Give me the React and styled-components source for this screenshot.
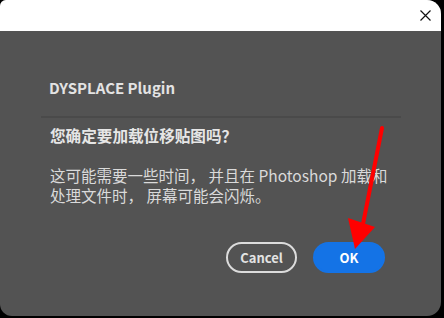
import React from "react";
import styled, { createGlobalStyle } from "styled-components";

const Global = createGlobalStyle`
  html, body { margin: 0; padding: 0; background: #000; }
  body { width: 444px; height: 318px; overflow: hidden; font-family: "Noto Sans CJK SC", sans-serif; }
`;

const Page = styled.div`
  position: relative;
  width: 444px;
  height: 318px;
  background: #000;
`;

const Dialog = styled.div`
  width: 441px;
  height: 316px;
  background: #535353;
  border-radius: 6px 14px 14px 12px;
  overflow: hidden;
  display: flex;
  flex-direction: column;
`;

const TitleBar = styled.div`
  height: 31px;
  background: #fff;
  display: flex;
  align-items: center;
  justify-content: flex-end;
  padding-right: 10px;
  flex-shrink: 0;
`;

const CloseButton = styled.button`
  width: 12px;
  height: 12px;
  padding: 0;
  border: none;
  background: none;
  display: flex;
  align-items: center;
  justify-content: center;
  margin-top: -1px;
`;

const Body = styled.div`
  padding: 47px 40px 0 41px;
  display: flex;
  flex-direction: column;
`;

const Title = styled.h1`
  margin: 0;
  padding-left: 8px;
  font-family: "Noto Sans CJK SC", sans-serif;
  font-weight: 700;
  font-size: 15px;
  line-height: 20px;
  color: #e3e3e3;
`;

const Divider = styled.div`
  margin-top: 18px;
  height: 2px;
  background: #4a4a4a;
`;

const Heading = styled.h2`
  margin: 7px 0 0;
  padding-left: 9px;
  font-family: "Noto Sans CJK SC", sans-serif;
  font-weight: 700;
  font-size: 15.6px;
  line-height: 20px;
  color: #e6e6e6;
`;

const Message = styled.p`
  margin: 20px 0 0;
  padding-left: 9px;
  width: 350px;
  font-family: "Noto Sans CJK SC", sans-serif;
  font-weight: 400;
  font-size: 15.5px;
  line-height: 20px;
  color: #dadada;
`;

const Actions = styled.div`
  margin-top: 37px;
  padding-right: 16px;
  display: flex;
  justify-content: flex-end;
  gap: 16px;
`;

const Button = styled.button`
  box-sizing: border-box;
  height: 31px;
  width: ${(p) => (p.$primary ? "72px" : "71px")};
  border-radius: 16px;
  border: 2px solid ${(p) => (p.$primary ? "#1473e6" : "#dcdcdc")};
  background: ${(p) => (p.$primary ? "#1473e6" : "transparent")};
  color: ${(p) => (p.$primary ? "#fff" : "#e3e3e3")};
  font-family: "Noto Sans CJK SC", sans-serif;
  font-weight: 700;
  font-size: 13px;
  padding: 0;
  display: flex;
  align-items: center;
  justify-content: center;
`;

const Annotation = styled.svg`
  position: absolute;
  left: 0;
  top: 0;
  pointer-events: none;
`;

export default function App() {
  return (
    <Page>
      <Global />
      <Dialog>
        <TitleBar>
          <CloseButton aria-label="Close">
            <svg width="11" height="11" viewBox="0 0 11 11">
              <path d="M0.5 0.5 L10.5 10.5 M10.5 0.5 L0.5 10.5" stroke="#111" strokeWidth="1.2" fill="none" />
            </svg>
          </CloseButton>
        </TitleBar>
        <Body>
          <Title>DYSPLACE Plugin</Title>
          <Divider />
          <Heading>您确定要加载位移贴图吗？</Heading>
          <Message>这可能需要一些时间， 并且在 Photoshop 加载和处理文件时， 屏幕可能会闪烁。</Message>
          <Actions>
            <Button>Cancel</Button>
            <Button $primary>OK</Button>
          </Actions>
        </Body>
      </Dialog>
      <Annotation width="444" height="318" viewBox="0 0 444 318">
        <line x1="382" y1="128" x2="363" y2="224" stroke="#ff0000" strokeWidth="4" strokeLinecap="round" />
        <polygon points="348,218 375,227 355,249" fill="#ff0000" />
      </Annotation>
    </Page>
  );
}
